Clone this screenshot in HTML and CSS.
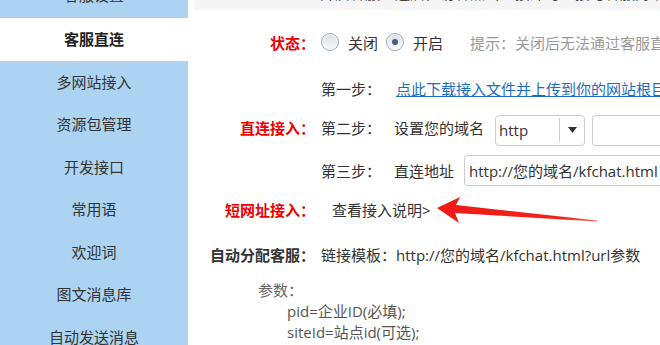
FILE: index.html
```html
<!DOCTYPE html>
<html>
  <head>
    <meta charset="utf-8">
    <title>客服直连</title>
    <link rel="stylesheet" href="styles.css">
  </head>
  <body>
    <div class="page">
      <nav class="side">
        <ul>
          <li>客服设置</li>
          <li class="active">客服直连</li>
          <li>多网站接入</li>
          <li>资源包管理</li>
          <li>开发接口</li>
          <li>常用语</li>
          <li>欢迎词</li>
          <li>图文消息库</li>
          <li>自动发送消息</li>
        </ul>
      </nav>

      <main class="content">
        <div class="topbar">
          <p>开启客服直连后，访客点击链接即可直接与客服对话，无需在网站中嵌入代码。</p>
        </div>

        <div class="row row-status">
          <div class="label red">状态：</div>
          <div class="value">
            <span class="radio"></span><span class="opt">关闭</span>
            <span class="radio checked"></span><span class="opt">开启</span>
            <span class="hint">提示：关闭后无法通过客服直连与访客对话</span>
          </div>
        </div>

        <div class="row row-step1">
          <div class="label"></div>
          <div class="value">
            <span class="step">第一步：</span>
            <a href="#" class="link">点此下载接入文件并上传到你的网站根目录</a>
          </div>
        </div>

        <div class="row row-step2">
          <div class="label red">直连接入：</div>
          <div class="value">
            <span class="step">第二步：</span>
            <span class="what">设置您的域名</span>
            <div class="select">
              <span class="sel-text">http</span>
              <span class="sel-btn"><svg width="9" height="6" viewBox="0 0 9 6"><path d="M0 0H9L4.5 6Z" fill="#333"/></svg></span>
            </div>
            <input class="field domain" type="text">
          </div>
        </div>

        <div class="row row-step3">
          <div class="label"></div>
          <div class="value">
            <span class="step">第三步：</span>
            <span class="what short">直连地址</span>
            <input class="field address" type="text" value="http://您的域名/kfchat.html">
          </div>
        </div>

        <div class="row row-short">
          <div class="label red">短网址接入：</div>
          <div class="value">
            <span class="guide">查看接入说明&gt;</span>
            <svg class="arrow" width="162" height="28" viewBox="0 0 162 28">
              <defs>
                <linearGradient id="ag" x1="0" y1="0" x2="1" y2="0">
                  <stop offset="0" stop-color="#f01a14"/>
                  <stop offset="0.8" stop-color="#f3241c"/>
                  <stop offset="1" stop-color="#f76a60"/>
                </linearGradient>
              </defs>
              <path d="M0 12 L23 1 L19 9 L160 24.5 L160 25.5 L18 17 L22 27 Z" fill="url(#ag)"/>
            </svg>
          </div>
        </div>

        <div class="row row-auto">
          <div class="label dark">自动分配客服：</div>
          <div class="value">链接模板：http://您的域名/kfchat.html?url参数</div>
        </div>

        <div class="params">
          <p class="params-title">参数：</p>
          <p class="param">pid=企业ID(必填);</p>
          <p class="param">siteId=站点id(可选);</p>
        </div>
      </main>
    </div>
  </body>
</html>
```

FILE: styles.css
```css
* {
  box-sizing: border-box;
}

html, body {
  margin: 0;
  padding: 0;
  height: 100%;
  overflow: hidden;
  background: #fff;
}

body {
  font-family: "Open Sans", "Noto Sans CJK SC", sans-serif;
  font-size: 15px;
  color: #333;
}

p {
  margin: 0;
}

.page {
  display: grid;
  grid-template-columns: 188px 1fr;
  column-gap: 6px;
  height: 345px;
}

/* left menu */
.side {
  background: #acd3f1;
  overflow: hidden;
}

.side ul {
  list-style: none;
  margin: -25.5px 0 0 0;
  padding: 0;
}

.side li {
  height: 42.5px;
  line-height: 42.5px;
  text-align: center;
  font-size: 15px;
  color: #333;
}

.side li:first-child {
  height: 43.5px;
  line-height: 40px;
}

.side li.active {
  background: #fff;
  font-weight: bold;
  color: #222;
}

/* right side */
.content {
  overflow: hidden;
}

.topbar {
  height: 10px;
  background: #f5f5f5;
  overflow: hidden;
  padding-left: 126px;
}

.topbar p {
  margin-top: -17px;
  line-height: 20px;
  white-space: nowrap;
  color: #444;
}

.row {
  display: grid;
  grid-template-columns: 121px 1fr;
  align-items: center;
}

.label {
  text-align: right;
  font-weight: bold;
  white-space: nowrap;
}

.label.red {
  color: #e00;
}

.label.dark {
  color: #333;
}

.value {
  display: flex;
  align-items: center;
  padding-left: 6px;
  white-space: nowrap;
}

.row-status {
  margin-top: 12px;
  height: 40px;
}

.row-step1 {
  height: 52px;
}

.row-step2 {
  height: 32px;
}

.row-step2 .label,
.row-step2 .step,
.row-step2 .what {
  padding-bottom: 6px;
}

.row-step3 {
  margin-top: 8px;
  height: 32px;
}

.row-short {
  height: 46px;
}

.row-auto {
  height: 44px;
}

/* radios */
.radio {
  width: 18px;
  height: 18px;
  border-radius: 50%;
  border: 1px solid #9aa9ba;
  background: linear-gradient(#d9dde2, #fafbfc);
  box-shadow: inset 0 0 0 1px #fff;
  display: flex;
  align-items: center;
  justify-content: center;
}

.radio.checked::after {
  content: "";
  width: 6px;
  height: 6px;
  border-radius: 50%;
  background: #3e5d86;
}

.opt {
  margin: 0 8px 0 9px;
}

.hint {
  margin-left: 19px;
  color: #999;
}

.step {
  width: 73px;
}

.link {
  color: #1b6ec2;
  text-decoration: underline;
  margin-left: 2px;
}

.what {
  margin-right: 11px;
}

.what.short {
  margin-right: 10px;
}

/* select + inputs */
.select {
  display: flex;
  align-items: center;
  width: 90px;
  height: 31px;
  border: 1px solid #ccc;
  border-radius: 4px;
  background: #fff;
}

.sel-text {
  flex: 1;
  padding-left: 3px;
}

.sel-btn {
  width: 25px;
  height: 24px;
  border-left: 1px solid #ccc;
  display: flex;
  align-items: center;
  justify-content: center;
}

.field {
  font: inherit;
  color: #333;
  height: 31px;
  border: 1px solid #ccc;
  border-radius: 3px;
  padding: 0 4px;
  outline: none;
}

.domain {
  margin-left: 7px;
  width: 120px;
}

.address {
  width: 260px;
  height: 31px;
}

.guide {
  margin-left: 11px;
}

.arrow {
  margin-left: 6px;
  margin-top: 2px;
  flex: none;
}

/* params */
.params {
  margin-top: 4px;
  padding-left: 64px;
  line-height: 21px;
  color: #555;
}

.params-title {
  color: #666;
}

.param {
  padding-left: 29px;
}
```
